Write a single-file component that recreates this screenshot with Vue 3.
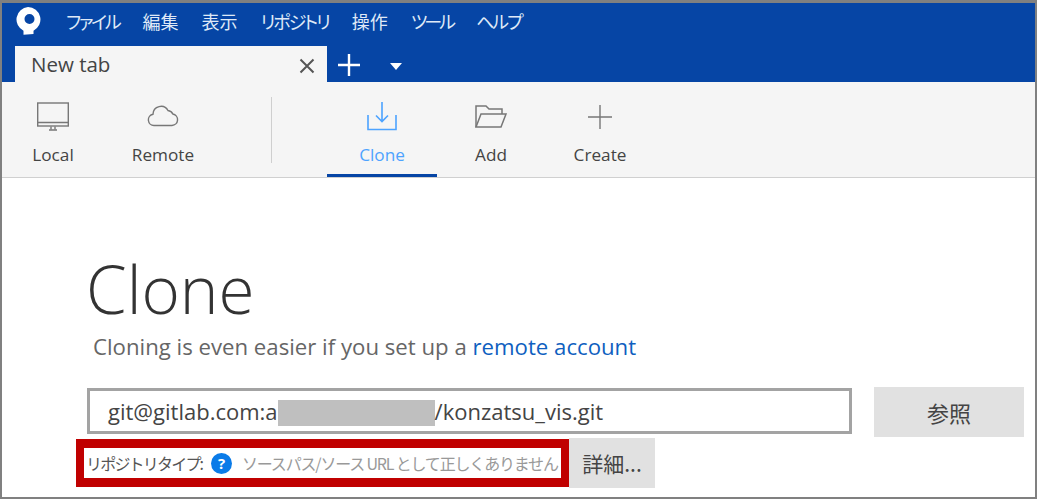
<script setup>
// Sourcetree "New tab" clone page
// kana titles sit tighter than the kanji ones, hence the per-item tracking
const menus = [
  { label: "ファイル", track: -2.2 },
  { label: "編集", track: 0 },
  { label: "表示", track: 0 },
  { label: "リポジトリ", track: -2 },
  { label: "操作", track: 0 },
  { label: "ツール", track: -3 },
  { label: "ヘルプ", track: -2 },
];
</script>

<template>
  <div class="win">
    <header class="menubar">
      <svg class="logo" width="26" height="28" viewBox="0 0 26 28">
        <path fill="#fff" fill-rule="evenodd" d="M13 0a12.500 12.500 0 0 1 5.500 23.700v3.300L8.500 27.800v-4.100A12.500 12.500 0 0 1 13 0zm1.500 7a5 5 0 1 0 0 10 5 5 0 0 0 0-10z" />
      </svg>
      <nav class="menus">
        <span v-for="m in menus" :key="m.label" :style="{ letterSpacing: m.track + 'px' }">{{ m.label }}</span>
      </nav>
    </header>

    <div class="tabbar">
      <div class="tab">
        <span>New tab</span>
        <svg width="16" height="16" viewBox="0 0 16 16"><path d="M1.500 1.500l13 13M14.500 1.500l-13 13" stroke="#555" stroke-width="2" fill="none" /></svg>
      </div>
      <svg class="plus" width="22" height="22" viewBox="0 0 22 22"><path d="M11 0v22M0 11h22" stroke="#fff" stroke-width="2.400" fill="none" /></svg>
      <svg class="caret" width="12" height="7" viewBox="0 0 12 7"><path d="M0 0h12L6 7z" fill="#fff" /></svg>
    </div>

    <div class="toolbar">
      <div class="item local">
        <svg width="34" height="30" viewBox="0 0 34 30" fill="none" stroke="#777" stroke-width="1.400">
          <rect x="1.700" y="1" width="30.600" height="23" />
          <path d="M2 20.500h30M13 28h8" />
          <path d="M15 24.500v3M19 24.500v3" />
        </svg>
        <span>Local</span>
      </div>
      <div class="item remote">
        <svg width="34" height="30" viewBox="0 0 34 30" fill="none" stroke="#777" stroke-width="1.400">
          <path d="M8 23.500a5.700 5.700 0 0 1-1-11.300 8 8 0 0 1 15-3.700 6 6 0 0 1 4.800 3.500 5.800 5.800 0 0 1-.8 11.500z" />
        </svg>
        <span>Remote</span>
      </div>
      <div class="sep"></div>
      <div class="item clone active">
        <svg width="34" height="30" viewBox="0 0 34 30" fill="none" stroke="#4da3ff" stroke-width="1.600">
          <path d="M17 0v19M11 13.500l6 6 6-6" />
          <path d="M3 13v14.500h28V13" />
        </svg>
        <span>Clone</span>
      </div>
      <div class="item add">
        <svg width="34" height="30" viewBox="0 0 34 30" fill="none" stroke="#777" stroke-width="1.500">
          <path d="M2 25V4h10l3 3h13v5" />
          <path d="M2 25l5-13h25l-5 13z" />
        </svg>
        <span>Add</span>
      </div>
      <div class="item create">
        <svg width="34" height="30" viewBox="0 0 34 30" fill="none" stroke="#777" stroke-width="1.400">
          <path d="M17 3v24M5 15h24" />
        </svg>
        <span>Create</span>
      </div>
    </div>

    <main class="page">
      <h1>Clone</h1>
      <p class="lead">Cloning is even easier if you set up a <a>remote account</a></p>

      <div class="source">
        <div class="field">git@gitlab.com:a<span class="mask"></span>/konzatsu_vis.git</div>
        <button class="browse">参照</button>
      </div>

      <div class="status">
        <div class="flag">
          <span class="label">リポジトリタイプ:</span>
          <span class="help">?</span>
          <span class="msg">ソースパス/ソース URL として正しくありません</span>
        </div>
        <button class="detail">詳細...</button>
      </div>
    </main>
  </div>
</template>

<style>
html, body { margin: 0; background: #fff; overflow: hidden; }
</style>

<style scoped>
.win {
  box-sizing: border-box;
  width: 1037px;
  height: 499px;
  overflow: hidden;
  border: solid #808080;
  border-width: 3px 2px 2px;
  font-family: "Open Sans", "Noto Sans CJK JP", sans-serif;
  color: #444;
  background: #fff;
}
.menubar {
  box-sizing: border-box;
  height: 42px;
  display: flex;
  align-items: center;
  background: #0645a5;
  padding: 0 0 6px 13px;
}
.menus {
  display: flex;
  gap: 23px;
  margin-left: 25px;
  color: #dfe9f7;
  font: 18px "Noto Sans CJK JP", sans-serif;
  font-feature-settings: "palt";
}
.tabbar {
  height: 37px;
  display: flex;
  align-items: flex-end;
  background: #0645a5;
  padding-left: 13px;
}
.tab {
  box-sizing: border-box;
  width: 312px;
  height: 36px;
  display: flex;
  align-items: center;
  justify-content: space-between;
  padding: 0 12px 0 16px;
  background: #f5f5f5;
  font-size: 20.500px;
  color: #444;
}
.tab svg { margin-top: 3px; }
.plus { align-self: center; margin: 2px 0 0 11px; }
.caret { align-self: center; margin: 5px 0 0 30px; }
.toolbar {
  box-sizing: border-box;
  height: 96px;
  display: flex;
  background: #f5f5f5;
  border-bottom: 1px solid #d0d0d0;
}
.item {
  box-sizing: border-box;
  display: flex;
  flex-direction: column;
  align-items: center;
  padding-top: 20px;
  font-size: 17.200px;
  color: #444;
}
.item span { margin-top: 11px; line-height: 24px; }
.local { width: 102px; }
.remote { width: 118px; }
.clone { width: 110px; }
.add { width: 108px; }
.create { width: 110px; }
.sep {
  width: 1px;
  height: 66px;
  margin: 15px 55px 0 49px;
  background: #cfcfcf;
}
.active {
  color: #4da3ff;
  height: 95px;
  border-bottom: 3px solid #0645a5;
}
.page { padding: 72px 0 0 84px; }
h1 {
  margin: 0;
  font-size: 65.500px;
  font-weight: 300;
  line-height: 78px;
  color: #333;
}
.lead {
  margin: 5px 0 0 7px;
  font-size: 22.200px;
  line-height: 28px;
  color: #666;
}
.lead a { color: #0f5fc0; }
.source {
  display: flex;
  margin-top: 26px;
  margin-left: 1px;
}
.field {
  box-sizing: border-box;
  width: 765px;
  height: 46px;
  margin-top: 1px;
  padding-left: 18px;
  border: 3px solid #a3a3a3;
  font-size: 22px;
  line-height: 40px;
  color: #444;
  white-space: nowrap;
}
.mask {
  display: inline-block;
  width: 157px;
  height: 26px;
  vertical-align: -6px;
  background: #bfbfbf;
}
button {
  border: 0;
  padding: 0;
  background: #e1e1e1;
  color: #444;
  font-family: "Noto Sans CJK JP", sans-serif;
}
.browse {
  width: 150px;
  height: 50px;
  margin-left: 22px;
  font-size: 22px;
}
.status {
  display: flex;
  margin: 1px 0 0 -10px;
}
.flag {
  box-sizing: border-box;
  width: 493px;
  height: 48px;
  margin-top: 1px;
  display: flex;
  align-items: center;
  border: solid #c00000;
  border-width: 9px 8px;
  padding-left: 2px;
  background: #fff;
  font-family: "Noto Sans CJK JP", sans-serif;
  white-space: nowrap;
}
.label { font-size: 16px; letter-spacing: -1.800px; color: #555; width: 116px; }
.help {
  flex: none;
  width: 21px;
  height: 21px;
  margin-left: 9px;
  border-radius: 50%;
  background: #0a7be8;
  color: #fff;
  font: bold 15px/21px "Open Sans", sans-serif;
  text-align: center;
}
.msg { margin-left: 10px; font-size: 16px; letter-spacing: -1.180px; color: #999; }
.detail {
  width: 86px;
  height: 50px;
  font-size: 21px;
}
</style>
